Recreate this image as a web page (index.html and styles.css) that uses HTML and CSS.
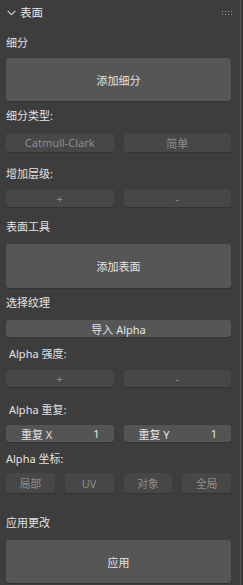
FILE: index.html
```html
<!DOCTYPE html>
<html lang="zh">
<head>
<meta charset="utf-8">
<link rel="stylesheet" href="styles.css">
</head>
<body>
<div class="panel">
  <div class="header">
    <svg class="chev" width="9" height="6" viewBox="0 0 9 6"><path d="M0.7 0.8 L4.5 4.6 L8.3 0.8" fill="none" stroke="#cfcfcf" stroke-width="1.1"/></svg>
    <span class="title">表面</span>
    <span class="grip"><i></i><i></i><i></i><i></i><i></i><i></i><i></i><i></i></span>
  </div>

  <div class="label l1">细分</div>
  <div class="btn big b1">添加细分</div>

  <div class="label l2">细分类型:</div>
  <div class="row r2"><div class="btn dim">Catmull-Clark</div><div class="btn dim">简单</div></div>

  <div class="label l3">增加层级:</div>
  <div class="row r3"><div class="btn dim">+</div><div class="btn dim">-</div></div>

  <div class="label l4">表面工具</div>
  <div class="btn big b4">添加表面</div>

  <div class="label l5">选择纹理</div>
  <div class="btn imp">导入 Alpha</div>

  <div class="label ind l6">Alpha 强度:</div>
  <div class="row r6"><div class="btn dim">+</div><div class="btn dim">-</div></div>

  <div class="label ind l7">Alpha 重复:</div>
  <div class="row r7">
    <div class="btn num"><span>重复 X</span><span>1</span></div>
    <div class="btn num"><span>重复 Y</span><span>1</span></div>
  </div>

  <div class="label l8">Alpha 坐标:</div>
  <div class="row four r8"><div class="btn dim">局部</div><div class="btn dim">UV</div><div class="btn dim">对象</div><div class="btn dim">全局</div></div>

  <div class="label l9">应用更改</div>
  <div class="btn big b9">应用</div>
</div>
</body>
</html>
```

FILE: styles.css
```css
html, body {
  margin: 0;
  padding: 0;
  background: #373737;
}
body {
  width: 243px;
  height: 585px;
  overflow: hidden;
  font-family: "Noto Sans", "Noto Sans CJK SC", sans-serif;
  font-size: 11px;
  color: #e2e2e2;
}
.panel {
  width: 241px;
  height: 585px;
  box-sizing: border-box;
  background: #3d3d3d;
  border-right: 1px solid #555555;
  padding: 0 9px 0 6px;
  display: flex;
  flex-direction: column;
}
.header {
  height: 25px;
  display: flex;
  align-items: center;
  flex-shrink: 0;
}
.chev {
  margin-left: 1px;
  margin-right: 4px;
}
.title {
  font-size: 11.5px;
  color: #e6e6e6;
  line-height: 14px;
}
.grip {
  margin-left: auto;
  margin-right: -1px;
  display: grid;
  grid-template-columns: repeat(4, 1px);
  grid-auto-rows: 1px;
  column-gap: 2px;
  row-gap: 2px;
  margin-top: 0px;
}
.grip i {
  display: block;
  width: 1px;
  height: 1px;
  background: #9a9a9a;
}
.label {
  height: 14px;
  line-height: 14px;
  white-space: nowrap;
  flex-shrink: 0;
}
.label.ind { padding-left: 3px; }
.btn {
  box-sizing: border-box;
  background: #565656;
  border-radius: 3px;
  display: flex;
  align-items: center;
  justify-content: center;
  color: #e4e4e4;
  white-space: nowrap;
  flex-shrink: 0;
  box-shadow: 0 1px 0 #333333;
}
.big { height: 43px; }
.row {
  display: grid;
  grid-template-columns: 1fr 1fr;
  column-gap: 10px;
  flex-shrink: 0;
}
.row.four {
  grid-template-columns: repeat(4, 1fr);
}
.btn.dim {
  background: #474747;
  color: #8c8c8c;
}
.btn.num {
  background: #545454;
  justify-content: space-between;
  padding: 0 14px 0 15px;
}
.imp { height: 17px; }

.l1 { margin-top: 11px; }
.b1 { margin-top: 8px; }
.l2 { margin-top: 8px; }
.r2 { margin-top: 10px; height: 19px; }
.l3 { margin-top: 15px; }
.r3 { margin-top: 8px; height: 18px; }
.l4 { margin-top: 13px; }
.b4 { margin-top: 10px; height: 44px; }
.l5 { margin-top: 8px; }
.imp { margin-top: 10px; }
.l6 { margin-top: 10px; }
.r6 { margin-top: 9px; height: 17px; }
.l7 { margin-top: 16px; }
.r7 { margin-top: 8px; height: 17px; }
.l8 { margin-top: 10px; }
.r8 { margin-top: 7px; height: 20px; }
.l9 { margin-top: 23px; }
.b9 { margin-top: 10px; }
```
